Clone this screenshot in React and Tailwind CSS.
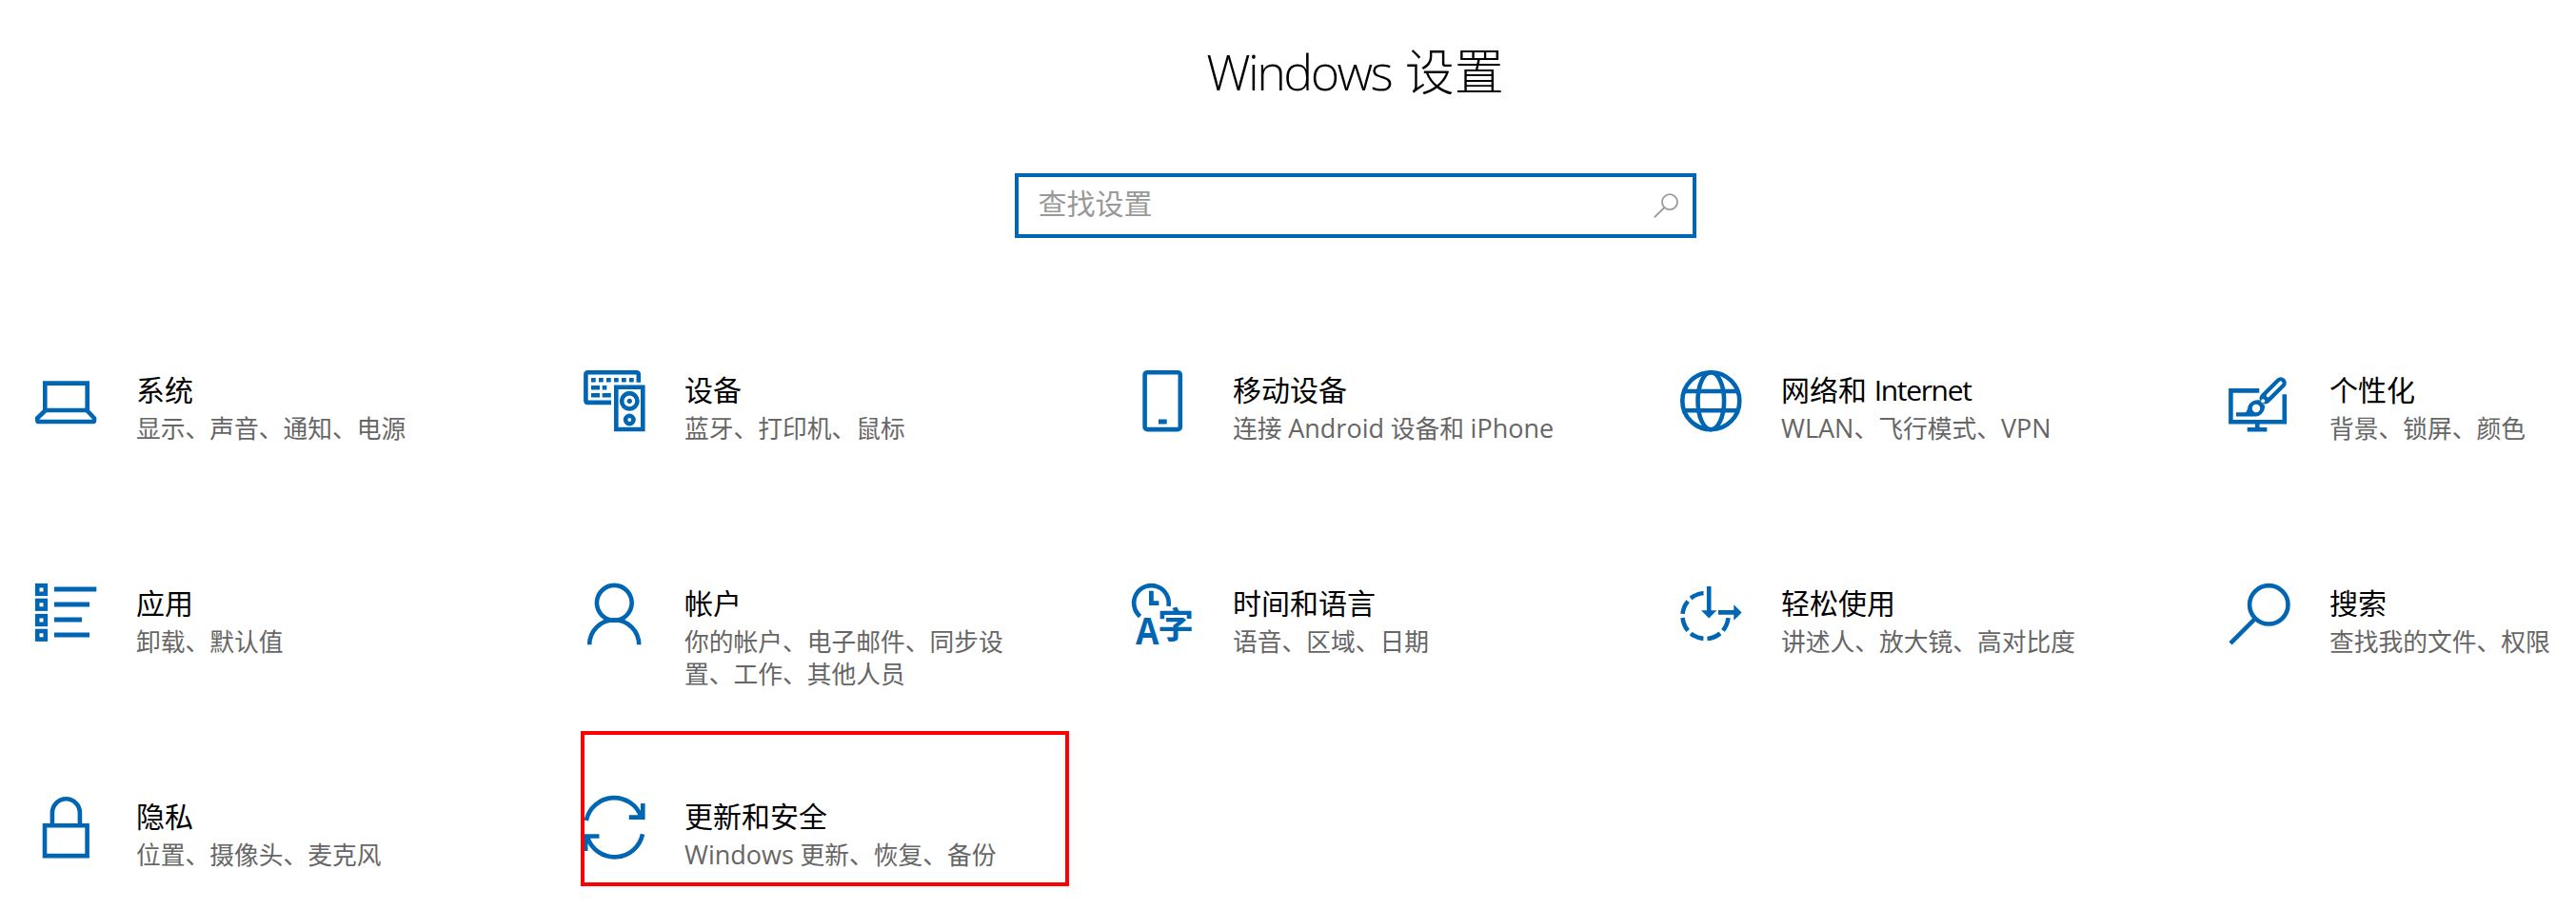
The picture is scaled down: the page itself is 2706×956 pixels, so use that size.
const LaptopIcon = () => (
  <>
    <path d="M10.3 42V13.6H54.7V42Z" />
    <path d="M10.3 42.5L2.3 50.3V52.4Q2.3 54 4 54H60.4Q62 54 62 52.4V50.3L54.7 42.5" />
  </>
);

const DevicesIcon = () => (
  <>
    <path d="M57.8 12.7V4.4Q57.8 2.2 55.6 2.2H4.6Q2.4 2.2 2.4 4.4V31.7Q2.4 33.9 4.6 33.9H29" />
    <path d="M8 10.3H56" strokeDasharray="4.7 3.3" />
    <path d="M8 18.3H17M19.7 18.3H24.4M8 26.2H17M19.7 26.2H28.8" />
    <path d="M34.3 17.8H62.3V62H34.3Z" />
    <circle cx="48.3" cy="32.3" r="8.2" />
    <circle cx="48.3" cy="32.3" r="2.6" fill="currentColor" stroke="none" />
    <circle cx="48.3" cy="52" r="4.2" />
  </>
);

const PhoneIcon = () => (
  <>
    <rect x="13.6" y="2.2" width="37.2" height="59.9" rx="2.6" />
    <path d="M28 54H36.7" strokeWidth="5" />
  </>
);

const GlobeIcon = () => (
  <>
    <circle cx="32.3" cy="32.2" r="30" />
    <ellipse cx="32.3" cy="32.2" rx="13.8" ry="30" />
    <path d="M4 22H60.6M4 42.3H60.6" />
  </>
);

const PersonalizeIcon = () => (
  <>
    <path d="M32.3 21.4H2.4V54.2H58.8V25.3" />
    <path d="M30.3 54V62.3M19.7 62.3H40.4" />
    <path d="M38.5 29.5L54.8 13.2" strokeWidth="12" strokeLinecap="round" />
    <path d="M41.5 26.5L54.8 13.2" stroke="white" strokeWidth="3.6" strokeLinecap="round" />
    <path
      d="M8 44.2H17C20.5 44 19.5 38 22 35.2C25 32 29 30.5 32.5 31.5L38 37C38.5 40 37 43.5 34.5 46Q32.3 48.4 29 48.4H8Z"
      fill="currentColor"
      stroke="none"
    />
    <circle cx="29" cy="40" r="4.2" fill="white" stroke="none" />
    <circle cx="36.2" cy="32.2" r="2" fill="white" stroke="none" />
  </>
);

const AppsIcon = () => (
  <>
    {[2.2, 18, 34.2, 50].map((y) => (
      <rect key={y} x="2.2" y={y} width="8.6" height="8.6" />
    ))}
    <path d="M20 6H64.3M20 22H57M20 38H49M20 54H57" strokeWidth="5" />
  </>
);

const AccountIcon = () => (
  <>
    <circle cx="32.3" cy="20.3" r="18.4" />
    <path d="M6.2 64.3A26 26 0 0 1 58.2 64.3" />
  </>
);

const TimeLanguageIcon = () => (
  <>
    <path d="M8.6 34.4A18.3 18.3 0 1 1 38.4 23.9" />
    <path d="M20.4 7.7V20.6H28.4" strokeWidth="4.8" />
    <g fill="currentColor" stroke="none" fontWeight="700">
      <text
        x="4"
        y="64.3"
        fontSize="39.5"
        textLength="24.5"
        lengthAdjust="spacingAndGlyphs"
        className="font-['Open_Sans',sans-serif]"
      >
        A
      </text>
      <text x="27" y="57.2" fontSize="38" className="font-['Noto_Sans_CJK_SC',sans-serif]">
        字
      </text>
    </g>
  </>
);

const EaseOfAccessIcon = () => (
  <>
    <circle
      cx="26.5"
      cy="34"
      r="24"
      pathLength="360"
      strokeDasharray="35 10 35 10 35 10 35 10 35 10 35 100"
      transform="rotate(5 26.5 34)"
    />
    <path d="M30.2 3V30M40 30.4H58" />
    <path
      d="M22 28.3H38.4L30.2 36.6ZM56.3 22.2L64.6 30.4L56.3 38.7Z"
      fill="currentColor"
      stroke="none"
    />
  </>
);

const SearchIcon = () => (
  <>
    <circle cx="42.3" cy="22.3" r="20.2" />
    <path d="M28 36.8L2 62.8" />
  </>
);

const LockIcon = () => (
  <>
    <path d="M10 30.2H54.6V62.1H10Z" />
    <path d="M17.9 30V16.8A14.5 14.5 0 0 1 46.9 16.8V30" />
  </>
);

const UpdateIcon = () => (
  <>
    <path d="M2.8 25A30 30 0 0 1 60.6 21.5" />
    <path d="M62.3 7V21.6H47.8" />
    <path d="M62 39.3A30 30 0 0 1 4.2 43" />
    <path d="M2.2 57V41.5H16.5" />
  </>
);

const categories = [
  { title: '系统', description: '显示、声音、通知、电源', icon: LaptopIcon },
  { title: '设备', description: '蓝牙、打印机、鼠标', icon: DevicesIcon },
  { title: '移动设备', description: '连接 Android 设备和 iPhone', icon: PhoneIcon },
  { title: '网络和 Internet', description: 'WLAN、飞行模式、VPN', icon: GlobeIcon },
  { title: '个性化', description: '背景、锁屏、颜色', icon: PersonalizeIcon },
  { title: '应用', description: '卸载、默认值', icon: AppsIcon },
  { title: '帐户', description: '你的帐户、电子邮件、同步设置、工作、其他人员', icon: AccountIcon },
  { title: '时间和语言', description: '语音、区域、日期', icon: TimeLanguageIcon },
  { title: '轻松使用', description: '讲述人、放大镜、高对比度', icon: EaseOfAccessIcon },
  { title: '搜索', description: '查找我的文件、权限', icon: SearchIcon },
  { title: '隐私', description: '位置、摄像头、麦克风', icon: LockIcon },
  { title: '更新和安全', description: 'Windows 更新、恢复、备份', icon: UpdateIcon, highlighted: true }
];

// Adjusts Latin words so they sit evenly next to the Chinese text
const MixedText = ({ text, latinClass }) =>
  text.split(/([A-Za-z]+)/).map((part, index) =>
    /^[A-Za-z]+$/.test(part) ? (
      <span key={index} className={latinClass}>
        {part}
      </span>
    ) : (
      part
    )
  );

const CategoryTile = ({ category }) => {
  const Icon = category.icon;

  return (
    <div className="relative flex h-[224px] items-start gap-[42px]">
      <svg
        viewBox="0 0 64 64"
        className="size-16 shrink-0 overflow-visible text-[#0066b4]"
        fill="none"
        stroke="currentColor"
        strokeWidth="4.6"
      >
        <Icon />
      </svg>
      <div className="w-[350px]">
        <h2 className="text-[30px] leading-[41px] whitespace-nowrap text-black">
          <MixedText text={category.title} latinClass="tracking-[-0.045em]" />
        </h2>
        <p className="mt-[3px] text-[25.75px] leading-[34px] text-[#666666]">
          <MixedText text={category.description} latinClass="text-[27px] leading-none" />
        </p>
      </div>
      {category.highlighted && (
        <div className="absolute top-[-69px] left-[-3px] h-[163px] w-[513px] border-4 border-[#ff0000]" />
      )}
    </div>
  );
};

const App = () => {
  return (
    <div
      lang="zh-CN"
      className="h-[956px] w-[2706px] overflow-hidden bg-white font-['Open_Sans','Noto_Sans_CJK_SC',sans-serif]"
    >
      <header className="flex flex-col items-center pl-[141px]">
        <h1 className="mt-10 text-[52px] leading-[70px] font-light text-black">
          <MixedText text="Windows 设置" latinClass="tracking-[-0.05em] mr-px" />
        </h1>
        <div className="mt-[72px] flex h-[68px] w-[716px] items-center justify-between border-4 border-[#0066b4] pr-[15px] pl-[21px]">
          <span className="pb-1 text-[30px] leading-10 text-[#999999]">查找设置</span>
          <svg
            viewBox="0 0 26 26"
            className="size-[26px] text-[#999999]"
            fill="none"
            stroke="currentColor"
            strokeWidth="1.8"
          >
            <circle cx="17" cy="9.2" r="8" />
            <path d="M11.4 15L0.8 25.4" />
          </svg>
        </div>
      </header>

      <main className="mt-[139px] grid grid-cols-[repeat(5,576px)] pl-[37px]">
        {categories.map((category) => (
          <CategoryTile key={category.title} category={category} />
        ))}
      </main>
    </div>
  );
};

export default App;
